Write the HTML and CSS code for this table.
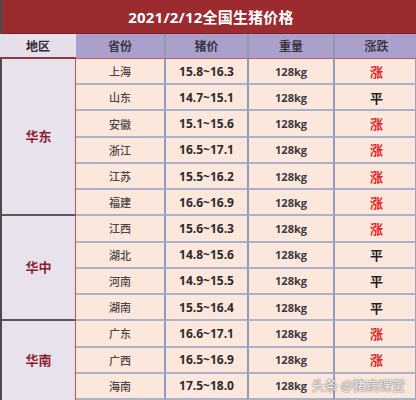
FILE: index.html
```html
<!DOCTYPE html>
<html lang="zh-CN">
<head>
<meta charset="utf-8">
<title>2021/2/12全国生猪价格</title>
<link rel="stylesheet" href="styles.css">
</head>
<body>
<div class="sheet">
  <div class="title">2021/2/12全国生猪价格</div>
  <div class="hd hd-region">地区</div>
  <div class="hd">省份</div>
  <div class="hd hd-sep">猪价</div>
  <div class="hd hd-sep">重量</div>
  <div class="hd hd-sep hd-light">涨跌</div>

  <div class="region span6">华东</div>
  <div class="prov">上海</div><div class="price">15.8~16.3</div><div class="wt">128kg</div><div class="chg up">涨</div>
  <div class="prov">山东</div><div class="price">14.7~15.1</div><div class="wt">128kg</div><div class="chg">平</div>
  <div class="prov">安徽</div><div class="price">15.1~15.6</div><div class="wt">128kg</div><div class="chg up">涨</div>
  <div class="prov">浙江</div><div class="price">16.5~17.1</div><div class="wt">128kg</div><div class="chg up">涨</div>
  <div class="prov">江苏</div><div class="price">15.5~16.2</div><div class="wt">128kg</div><div class="chg up">涨</div>
  <div class="prov">福建</div><div class="price">16.6~16.9</div><div class="wt">128kg</div><div class="chg up">涨</div>

  <div class="region span4">华中</div>
  <div class="prov">江西</div><div class="price">15.6~16.3</div><div class="wt">128kg</div><div class="chg up">涨</div>
  <div class="prov">湖北</div><div class="price">14.8~15.6</div><div class="wt">128kg</div><div class="chg">平</div>
  <div class="prov">河南</div><div class="price">14.9~15.5</div><div class="wt">128kg</div><div class="chg">平</div>
  <div class="prov">湖南</div><div class="price">15.5~16.4</div><div class="wt">128kg</div><div class="chg">平</div>

  <div class="region span3 last">华南</div>
  <div class="prov">广东</div><div class="price">16.6~17.1</div><div class="wt">128kg</div><div class="chg up">涨</div>
  <div class="prov">广西</div><div class="price">16.5~16.9</div><div class="wt">128kg</div><div class="chg up">涨</div>
  <div class="prov">海南</div><div class="price">17.5~18.0</div><div class="wt">128kg</div><div class="chg"></div>

  <div class="watermark">头条 @猪病课堂</div>
</div>
</body>
</html>
```

FILE: styles.css
```css
* { box-sizing: border-box; }
html, body { margin: 0; padding: 0; }
body {
  width: 416px;
  height: 400px;
  overflow: hidden;
  background: #fbe7dc;
  font-family: "Open Sans", "Noto Sans CJK SC", sans-serif;
}
.sheet {
  position: relative;
  width: 416px;
  height: 400px;
  display: grid;
  grid-template-columns: 74px 88px 83px 86px 85px;
  grid-template-rows: 34px 25px repeat(13, 1fr);
  border-left: 2px solid #4d4a4e;
  border-right: 1px solid #9aa3bd;
}
.sheet > div:not(.watermark) {
  display: flex;
  align-items: center;
  justify-content: center;
}
.title {
  grid-column: 1 / -1;
  background: #9b2b2e;
  color: #fff;
  font-weight: 700;
  font-size: 15px;
  letter-spacing: 0.2px;
  border-bottom: 1px solid #7e1f24;
  padding-left: 2px;
}
.hd {
  background: #ab9fcb;
  color: #3a3440;
  font-size: 12px;
  font-weight: 700;
  border-bottom: 1px solid #b7616e;
}
.hd-region {
  background: #e6dee9;
  color: #2e2a30;
  margin-left: -2px;
  border-bottom: 2px solid #8e3a46;
}
.hd-sep { border-left: 2px solid #8d98bb; }
.hd-light { font-weight: 500; color: #2a2a2a; }
.region {
  grid-column: 1;
  background: #e8e2ec;
  color: #8b1f30;
  font-weight: 700;
  font-size: 13px;
  border-right: 1px solid #c4525d;
  border-bottom: 2px solid #5a565c;
  padding-bottom: 2px;
}
.region.last { border-bottom: none; }
.span6 { grid-row: span 6; }
.span4 { grid-row: span 4; }
.span3 { grid-row: span 3; }
.prov, .price, .wt, .chg {
  border-bottom: 2px solid #a9b2c8;
  color: #3e3a3c;
}
.price, .wt, .chg { border-left: 2px solid #8f9cbd; }
.prov { font-size: 11px; font-weight: 500; color: #4a4446; }
.price { font-size: 12px; font-weight: 700; color: #2c2a2c; }
.wt { font-size: 11px; font-weight: 700; color: #3a3840; }
.chg { font-size: 13px; font-weight: 700; color: #1f1f1f; }
.chg.up { color: #e2231e; }
.watermark {
  position: absolute;
  right: 10px;
  bottom: 6px;
  font-family: "Noto Sans CJK SC", sans-serif;
  font-size: 13px;
  color: #f4f0f0;
  text-shadow: 0 0 1px #6a6a6a, 0 0 2px #7a7a7a;
  white-space: nowrap;
}
```
